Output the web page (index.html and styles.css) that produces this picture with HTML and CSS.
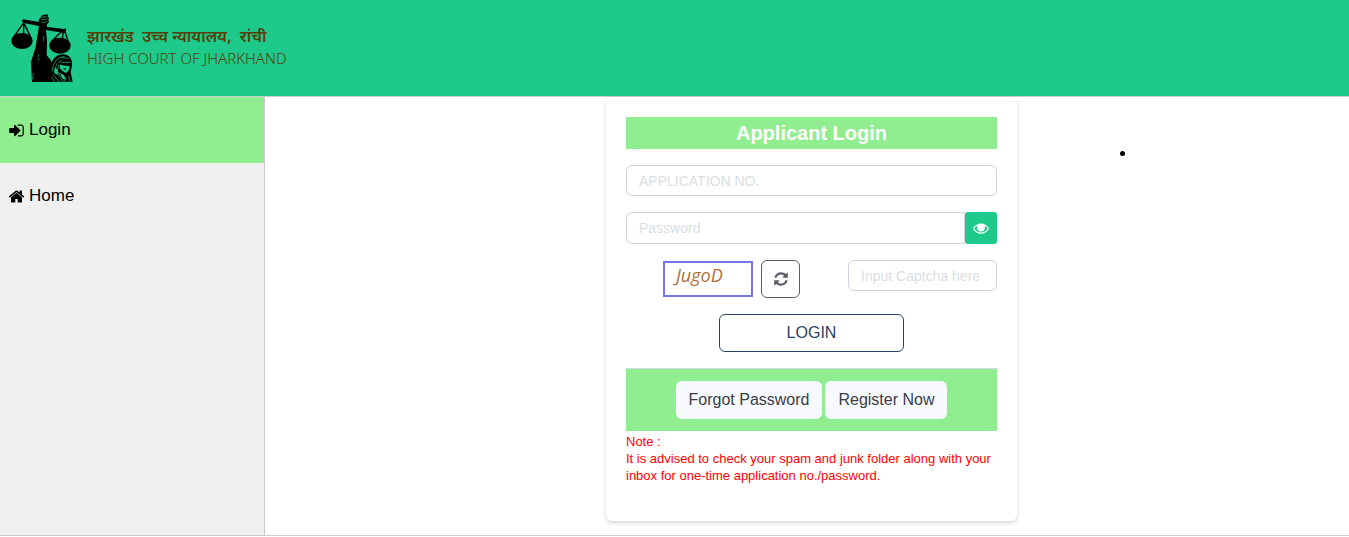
FILE: index.html
```
<!DOCTYPE html>
<html lang="en">
<head>
  <meta charset="UTF-8">
  <meta name="viewport" content="width=device-width, initial-scale=1.0">
  <title>Applicant Login</title>
  <link rel="stylesheet" href="styles.css">
</head>
<body>
  <header class="header">
    <svg class="logo" viewBox="33 27 186 204" aria-hidden="true">
      <path d="M120 40l6-9 18-3-1 6 4 5-2 6 2 6-7 8 1 7 52 6 5-2v6l-4 8-56-9 3 34-1 42 12 14 4 10 0 56H96l-3-60 14-46 10-62-46-9-6-5 4-6 48 8-1-6z"/>
      <g fill="none" stroke="#000" stroke-width="4">
        <path d="M70 55L38 100M71 55v35M72 55l22 45M190 74l-38 38M191 74l-5 34M193 74l14 42"/>
      </g>
      <ellipse cx="66" cy="108" rx="32" ry="24"/>
      <ellipse cx="180" cy="122" rx="32" ry="24"/>
      <path d="M150 192c2-28 20-46 42-44 18 2 26 16 24 34l-4 20 6 28h-66z"/>
      <g fill="none" stroke="#1dca8b" stroke-width="2">
        <path d="M122 38l18-4M123 45l20-4M124 53l16-3M132 92l-2 16M116 148l-2 8M115 160l2 6M100 204l-2 20"/>
        <path d="M156 200c2-26 16-44 38-46M164 208c-2-20 8-36 20-42M158 210l20 18M166 196l22 32M176 180l-4 18 24 30M184 158l22 2M206 214l4 14M154 216l8 12"/>
      </g>
      <path d="M182 170l29 2-4 23-9 9-12-7-7-9z" fill="#1dca8b"/>
      <path d="M176 172l38 2-1 9-18-1-20-4zM190 190l10 1-3 3-7-1z"/>
      <path d="M163 190l9 1 2 20-9-6zM180 204l12 7 7 14-12-5z" fill="#1dca8b"/>
    </svg>
    <div class="court-name">
      <span class="name-hi" lang="hi">झारखंड&nbsp; उच्च न्यायालय,&nbsp; रांची</span>
      <span class="name-en">HIGH COURT OF JHARKHAND</span>
    </div>
  </header>

  <div class="wrapper">
    <nav class="sidebar">
      <a class="active" href="#login">
        <svg class="icon" viewBox="0 0 1792 1792" aria-hidden="true"><path d="M1312 896q0 26-19 45l-544 544q-19 19-45 19t-45-19-19-45v-288h-448q-26 0-45-19t-19-45v-384q0-26 19-45t45-19h448v-288q0-26 19-45t45-19 45 19l544 544q19 19 19 45zm352-352v704q0 119-84.500 203.500t-203.500 84.500h-320q-13 0-22.500-9.500t-9.500-22.500q0-4-1-20t-.5-26.500 3-23.500 10-19.500 20.500-6.500h320q66 0 113-47t47-113v-704q0-66-47-113t-113-47h-312l-11.500-1-11.500-3-8-5.500-7-9-2-13.500q0-4-1-20t-.5-26.500 3-23.500 10-19.500 20.500-6.500h320q119 0 203.500 84.500t84.500 203.500z"/></svg>
        Login
      </a>
      <a href="#home">
        <svg class="icon" viewBox="0 0 1792 1792" aria-hidden="true"><path d="M1472 992v480q0 26-19 45t-45 19h-384v-384h-256v384h-384q-26 0-45-19t-19-45v-480q0-1 .5-3t.5-3l575-474 575 474q1 2 1 6zm223-69l-62 74q-8 9-21 11h-3q-13 0-21-7l-692-577-692 577q-12 8-24 7-13-2-21-11l-62-74q-8-10-7-23.500t11-21.500l719-599q32-26 76-26t76 26l244 204v-195q0-14 9-23t23-9h192q14 0 23 9t9 23v408l219 182q10 8 11 21.500t-7 23.500z"/></svg>
        Home
      </a>
    </nav>

    <main class="content">
      <section class="card">
        <h1>Applicant Login</h1>
        <form action="#" method="POST">
          <input type="text" class="field" name="application_no" placeholder="APPLICATION NO." aria-label="Application No.">
          <div class="password-group">
            <input type="password" class="field" id="password" name="password" placeholder="Password" aria-label="Password">
            <button type="button" class="btn-eye" aria-label="Show password" onclick="togglePassword()">
              <svg class="icon" viewBox="0 0 1792 1792" aria-hidden="true"><path d="M1664 960q-152-236-381-353 61 104 61 225 0 185-131.500 316.500t-316.500 131.500-316.500-131.500-131.500-316.500q0-121 61-225-229 117-381 353 133 205 333.500 326.500t434.500 121.500 434.500-121.500 333.500-326.500zm-720-384q0-20-14-34t-34-14q-125 0-214.500 89.500t-89.500 214.500q0 20 14 34t34 14 34-14 14-34q0-86 61-147t147-61q20 0 34-14t14-34zm848 384q0 34-20 69-140 230-376.500 368.500t-499.500 138.500-499.500-139-376.500-368q-20-35-20-69t20-69q140-229 376.500-368t499.500-139 499.500 139 376.500 368q20 35 20 69z"/><circle cx="896" cy="860" r="400"/></svg>
            </button>
          </div>
          <div class="captcha-row">
            <div class="captcha">JugoD</div>
            <button type="button" class="btn-refresh" aria-label="Refresh captcha">
              <svg class="icon" viewBox="0 0 1792 1792" aria-hidden="true"><path d="M1639 1056q0 5-1 7-64 268-268 434.500t-478 166.500q-146 0-282.500-55t-243.500-157l-129 129q-19 19-45 19t-45-19-19-45v-448q0-26 19-45t45-19h448q26 0 45 19t19 45-19 45l-137 137q71 66 161 102t187 36q134 0 250-65t186-179q11-17 53-117 8-23 30-23h192q13 0 22.500 9.500t9.500 22.500zm25-800v448q0 26-19 45t-45 19h-448q-26 0-45-19t-19-45 19-45l138-138q-148-137-349-137-134 0-250 65t-186 179q-11 17-53 117-8 23-30 23h-199q-13 0-22.500-9.500t-9.500-22.500v-7q65-268 270-434.500t480-166.500q146 0 284 55.500t245 156.500l130-129q19-19 45-19t45 19 19 45z"/></svg>
            </button>
            <input type="text" class="field captcha-input" name="captcha" placeholder="Input Captcha here" aria-label="Captcha">
          </div>
          <button type="submit" class="btn-login">LOGIN</button>
        </form>
        <div class="card-footer">
          <a class="btn-light" href="#forgot">Forgot Password</a>
          <a class="btn-light" href="#register">Register Now</a>
        </div>
        <p class="note">Note :<br>It is advised to check your spam and junk folder along with your inbox for one-time application no./password.</p>
      </section>
      <ul class="messages">
        <li></li>
      </ul>
    </main>
  </div>

  <script>
    function togglePassword() {
      const input = document.getElementById('password');
      input.type = input.type === 'password' ? 'text' : 'password';
    }
  </script>
</body>
</html>
```
FILE: styles.css
```
* {
  box-sizing: border-box;
}
body {
  margin: 0;
  font-family: "Liberation Sans", Arial, sans-serif;
  font-size: 16px;
  line-height: 24px;
  color: #000000;
  background-color: #ffffff;
}
.header {
  display: flex;
  align-items: center;
  gap: 14px;
  height: 97px;
  padding: 0 11px;
  background-color: #1dca8b;
  border-bottom: 1px solid #cccccc;
}
.logo {
  width: 62px;
  height: 68px;
}
.court-name {
  display: flex;
  flex-direction: column;
  color: #553f0a;
}
.name-hi {
  font-family: "Noto Sans Devanagari", "Noto Sans", sans-serif;
  font-size: 16px;
  line-height: 20px;
  font-weight: 600;
}
.name-en {
  font-family: "Noto Sans", "Open Sans", sans-serif;
  font-size: 15px;
  line-height: 18px;
  font-weight: 300;
}
.wrapper {
  display: flex;
  border-bottom: 1px solid #cccccc;
}
.sidebar {
  flex: 0 0 265px;
  background-color: #f0f0f0;
  border-right: 1px solid #cccccc;
}
.sidebar a {
  display: flex;
  align-items: center;
  gap: 4px;
  height: 66px;
  padding: 0 8px;
  font-size: 17px;
  color: #000000;
  text-decoration: none;
}
.icon {
  width: 16px;
  height: 16px;
  fill: currentColor;
}
.sidebar .icon {
  width: 17px;
  height: 17px;
}
.sidebar a.active {
  background-color: #90ee90;
}
.content {
  flex: 1;
  display: grid;
  grid-template-columns: 1fr minmax(0, 411px) 1fr;
  padding: 0 0 14px 9px;
}
.card {
  grid-column: 2;
  padding: 20px 20px 37px;
  background-color: #ffffff;
  border-radius: 6px;
  box-shadow: 0 2px 4px rgba(0, 0, 0, 0.16);
}
h1 {
  margin: 0 0 16px;
  font-size: 20px;
  line-height: 32px;
  text-align: center;
  color: #ffffff;
  background-color: #90ee90;
}
form {
  display: flex;
  flex-direction: column;
  gap: 16px;
}
.field {
  width: 100%;
  height: 31px;
  padding: 0 12px;
  border: 1px solid #d1d0e0;
  border-radius: 6px;
  font-family: inherit;
  font-size: 14px;
  background-color: #ffffff;
}
.field::placeholder {
  color: #dadee4;
}
.password-group {
  display: flex;
  height: 32px;
}
.password-group .field {
  flex: 1;
  height: 100%;
  border-radius: 6px 0 0 6px;
}
button {
  padding: 0;
  font-family: inherit;
  font-size: 16px;
  cursor: pointer;
}
.btn-eye {
  display: flex;
  align-items: center;
  justify-content: center;
  width: 32px;
  border: none;
  border-radius: 3px;
  color: #ffffff;
  background-color: #1dca8b;
}
.captcha-row {
  display: flex;
  align-items: flex-start;
  justify-content: flex-end;
}
.captcha {
  align-self: center;
  width: 90px;
  height: 36px;
  padding-left: 11px;
  border: 2px solid #7676e8;
  font-family: "Open Sans", sans-serif;
  font-size: 18px;
  line-height: 24px;
  font-style: italic;
  color: #b0703c;
}
.btn-refresh {
  display: flex;
  align-items: center;
  justify-content: center;
  width: 39px;
  height: 38px;
  margin: 0 48px 0 8px;
  border: 1px solid #5c5c68;
  border-radius: 6px;
  color: #5c5c68;
  background-color: #ffffff;
}
.captcha-input {
  width: 149px;
}
.btn-login {
  align-self: center;
  width: 50%;
  height: 38px;
  border: 1px solid #2c4364;
  border-radius: 6px;
  color: #2c4364;
  background-color: #ffffff;
}
.card-footer {
  display: flex;
  justify-content: center;
  gap: 3px;
  margin-top: 16px;
  padding: 12px;
  background-color: #90ee90;
  border-top: 1px solid #d0dce8;
}
.btn-light {
  padding: 7px 13px;
  border-radius: 6px;
  color: #3a3c48;
  background-color: #f8f9fd;
  text-decoration: none;
}
.note {
  margin: 2px 0 0;
  font-size: 13px;
  line-height: 17px;
  color: #ff0000;
}
.messages {
  margin: 43px 0 0 80px;
  font-size: 18px;
}
```
